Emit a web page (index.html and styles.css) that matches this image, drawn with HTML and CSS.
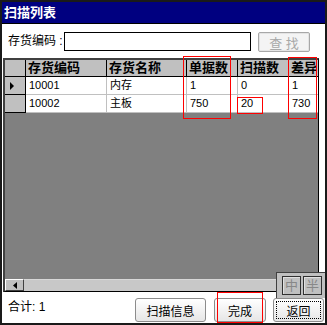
FILE: index.html
```html
<!DOCTYPE html>
<html lang="zh">

<head>
    <meta charset="UTF-8">
    <meta name="viewport" content="width=device-width, initial-scale=1.0">
    <title>扫描列表</title>
    <link rel="stylesheet" href="styles.css">
</head>

<body>
    <div class="window">
        <div class="titlebar">扫描列表</div>

        <div class="search">
            <label class="search-label" for="code">存货编码 :</label>
            <input class="search-input" type="text" id="code">
            <button class="btn-find" disabled>查 找</button>
        </div>

        <div class="grid">
            <div class="grid-row head">
                <div class="cell rh"></div>
                <div class="cell">存货编码</div>
                <div class="cell">存货名称</div>
                <div class="cell">单据数</div>
                <div class="cell">扫描数</div>
                <div class="cell">差异</div>
            </div>
            <div class="grid-row">
                <div class="cell rh">
                    <svg class="current" width="5" height="8" viewBox="0 0 5 8"><path d="M0 0L4 4L0 8Z" fill="#000"/></svg>
                </div>
                <div class="cell">10001</div>
                <div class="cell">内存</div>
                <div class="cell">1</div>
                <div class="cell">0</div>
                <div class="cell">1</div>
            </div>
            <div class="grid-row">
                <div class="cell rh"></div>
                <div class="cell">10002</div>
                <div class="cell">主板</div>
                <div class="cell">750</div>
                <div class="cell">20</div>
                <div class="cell">730</div>
            </div>
            <div class="grid-empty"></div>
            <div class="hscroll">
                <div class="hscroll-btn">
                    <svg width="4" height="7" viewBox="0 0 4 7"><path d="M4 0L0 3.5L4 7Z" fill="#000"/></svg>
                </div>
                <div class="hscroll-track"></div>
            </div>
        </div>

        <div class="footer">
            <span class="total">合计: 1</span>
            <div class="actions">
                <button class="btn btn-scan">扫描信息</button>
                <button class="btn btn-done">完成</button>
                <button class="btn btn-back">返回</button>
            </div>
        </div>

        <!-- input method panel -->
        <div class="ime-panel">
            <span class="ime-key">中</span>
            <span class="ime-key">半</span>
        </div>

        <!-- red review marks -->
        <div class="mark mark-bill"></div>
        <div class="mark mark-scan"></div>
        <div class="mark mark-diff"></div>
        <div class="mark mark-done"></div>
    </div>
</body>

</html>
```

FILE: styles.css
```css
body {
    margin: 0;
    background-color: white;
}

.window {
    position: relative;
    width: 327px;
    height: 325px;
    box-sizing: border-box;
    border: 2px solid #1a1a1a;
    background-color: white;
    font-family: "Liberation Sans", "Noto Sans CJK SC", sans-serif;
    display: flex;
    flex-direction: column;
}

.titlebar {
    height: 21px;
    line-height: 21px;
    background-color: #000080;
    border-bottom: 1px solid #000;
    color: white;
    font-weight: bold;
    font-size: 13px;
    padding-left: 2px;
}

.search {
    display: flex;
    align-items: flex-start;
    margin-top: 8px;
    padding-left: 6px;
}

.search-label {
    width: 56px;
    font-size: 12px;
    line-height: 19px;
}

.search-input {
    width: 187px;
    height: 19px;
    box-sizing: border-box;
    margin: 0;
    padding: 0 2px;
    border: 1px solid #000;
    font-size: 11px;
}

.btn-find {
    margin-left: 7px;
    width: 52px;
    height: 20px;
    padding: 0;
    border: 1px solid #a8a8a8;
    border-radius: 2px;
    box-shadow: inset 0 0 0 1px #e4e4e4;
    background-color: #f4f4f4;
    color: #a8a8a8;
    font-family: inherit;
    font-size: 13px;
}

.grid {
    margin: 6px 0 0 1px;
    width: 316px;
    height: 234px;
    box-sizing: border-box;
    border-style: solid;
    border-width: 2px 1px 1px 2px;
    border-color: #404040 #000 #000 #404040;
    background-color: #808080;
    display: flex;
    flex-direction: column;
    overflow: hidden;
}

.grid-row {
    display: grid;
    grid-template-columns: 21px 81px 80px 51px 51px 60px;
    height: 18px;
    flex: none;
}

.grid-row.head {
    height: 17px;
}

.cell {
    box-sizing: border-box;
    background-color: white;
    border-right: 1px solid #c0c0c0;
    border-bottom: 1px solid #c0c0c0;
    padding-left: 3px;
    font-size: 11px;
    line-height: 17px;
    white-space: nowrap;
    overflow: hidden;
}

.head .cell {
    background-color: #c0c0c0;
    border-color: #000;
    font-weight: bold;
    font-size: 13px;
    line-height: 16px;
    padding-left: 2px;
}

.cell.rh {
    background-color: #c0c0c0;
    border-color: #000;
    padding-left: 5px;
}

.current {
    display: block;
    margin-top: 5px;
}

.grid-empty {
    flex: 1;
}

.hscroll {
    display: flex;
    height: 12px;
    flex: none;
    background-color: #c8c8c8;
}

.hscroll-btn {
    width: 19px;
    box-sizing: border-box;
    border-style: solid;
    border-width: 1px;
    border-color: #fff #404040 #404040 #fff;
    background-color: #c0c0c0;
    display: flex;
    align-items: center;
    padding-left: 7px;
}

.hscroll-track {
    flex: 1;
    border-top: 1px solid #d8d8d8;
}

.footer {
    display: flex;
    align-items: flex-start;
    padding: 6px 1px 0 6px;
}

.total {
    font-size: 12px;
    line-height: 14px;
    margin-top: 2px;
}

.actions {
    margin-left: auto;
    display: flex;
    gap: 7px;
}

.btn {
    height: 24px;
    padding: 0;
    border: 1px solid #8c8c8c;
    border-radius: 3px;
    background: linear-gradient(#ffffff, #e6e6e6);
    color: #000;
    font-family: inherit;
    font-size: 12px;
}

.btn-scan {
    width: 71px;
    margin-right: 1px;
}

.btn-done {
    width: 52px;
}

.btn-back {
    width: 51px;
    outline: 1px dotted #000;
    outline-offset: -4px;
}

.ime-panel {
    position: absolute;
    left: 274px;
    top: 270px;
    width: 49px;
    height: 26px;
    box-sizing: border-box;
    border-top: 1px solid #404040;
    border-left: 1px solid #404040;
    background-color: #c0c0c0;
    display: flex;
    gap: 2px;
    padding: 3px 0 0 5px;
}

.ime-key {
    width: 19px;
    height: 19px;
    box-sizing: border-box;
    border: 1px solid #303030;
    box-shadow: inset 1px 1px 0 #e0e0e0;
    color: #888;
    font-size: 13px;
    line-height: 17px;
    text-align: center;
}

.mark {
    position: absolute;
    border: 1px solid red;
    box-sizing: border-box;
}

.mark-bill {
    left: 181px;
    top: 54px;
    width: 48px;
    height: 63px;
}

.mark-scan {
    left: 235px;
    top: 95px;
    width: 26px;
    height: 17px;
}

.mark-diff {
    left: 286px;
    top: 55px;
    width: 29px;
    height: 62px;
}

.mark-done {
    left: 215px;
    top: 290px;
    width: 46px;
    height: 31px;
}
```
